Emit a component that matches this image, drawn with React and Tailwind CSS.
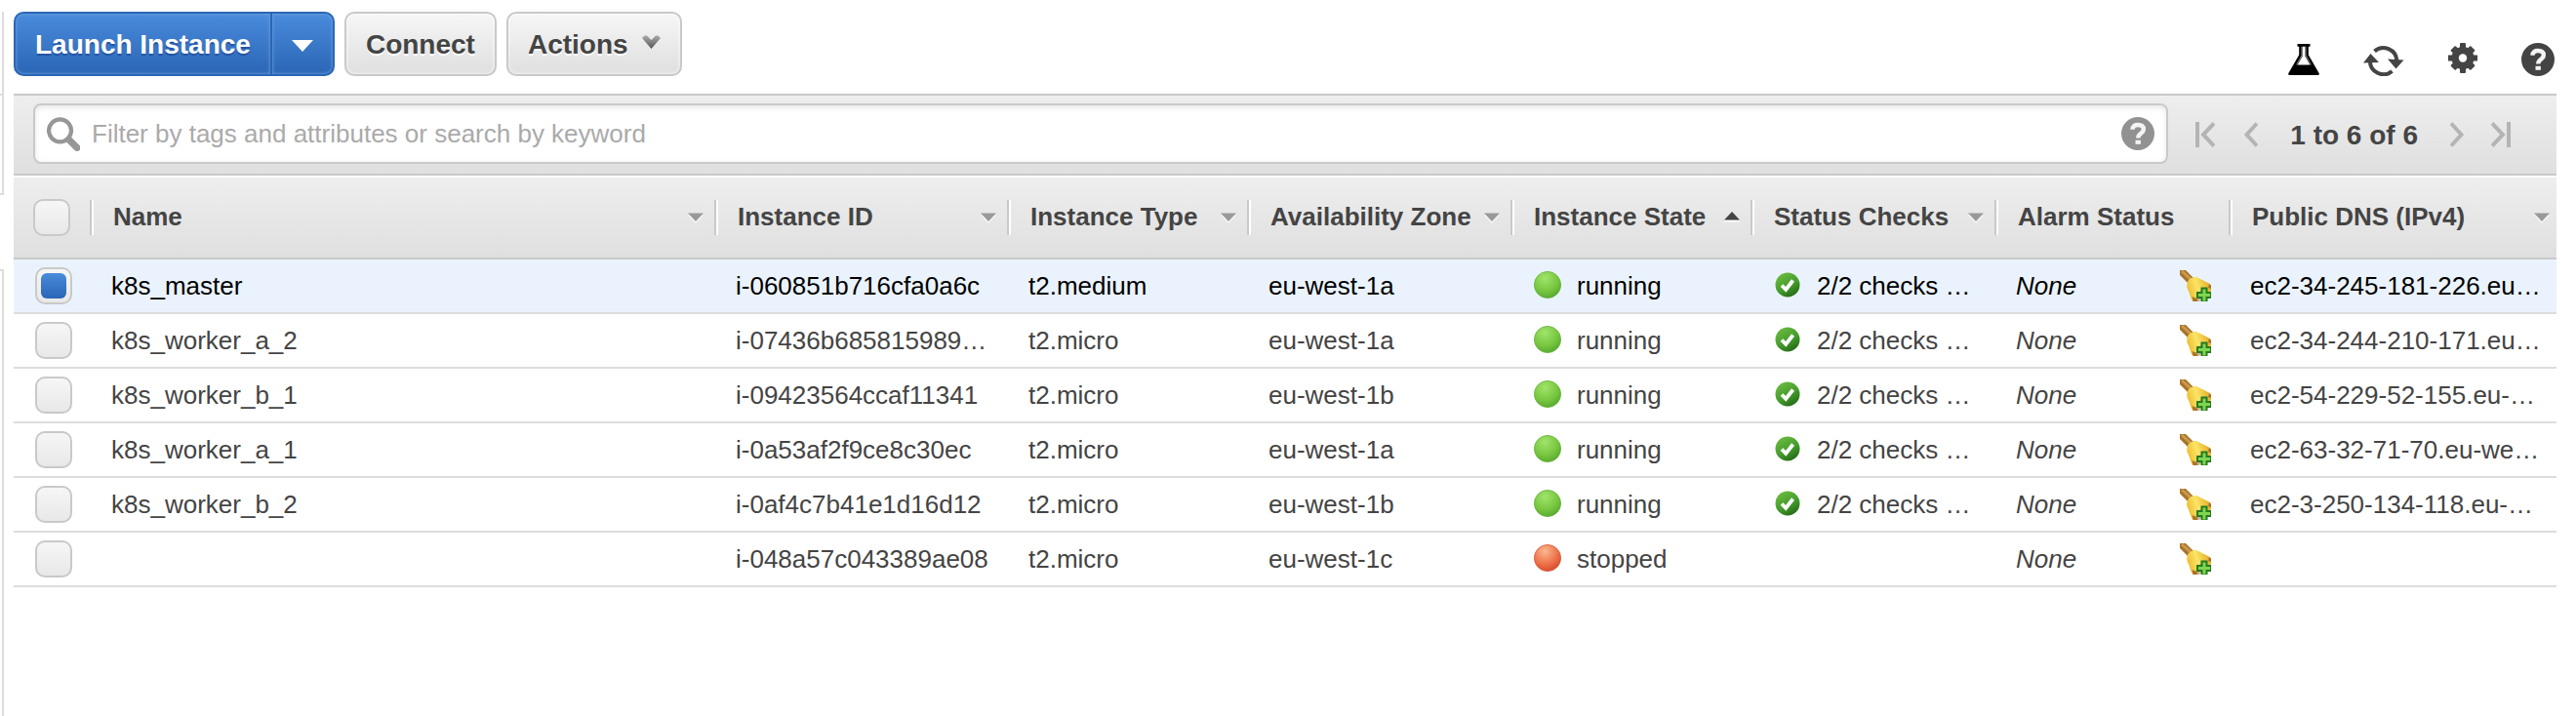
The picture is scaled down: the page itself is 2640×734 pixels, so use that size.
import React from "react";

const instances = [
  { name: "k8s_master", id: "i-060851b716cfa0a6c", type: "t2.medium", zone: "eu-west-1a", state: "running", checks: "2/2 checks …", dns: "ec2-34-245-181-226.eu…", selected: true },
  { name: "k8s_worker_a_2", id: "i-07436b685815989…", type: "t2.micro", zone: "eu-west-1a", state: "running", checks: "2/2 checks …", dns: "ec2-34-244-210-171.eu…" },
  { name: "k8s_worker_b_1", id: "i-09423564ccaf11341", type: "t2.micro", zone: "eu-west-1b", state: "running", checks: "2/2 checks …", dns: "ec2-54-229-52-155.eu-…" },
  { name: "k8s_worker_a_1", id: "i-0a53af2f9ce8c30ec", type: "t2.micro", zone: "eu-west-1a", state: "running", checks: "2/2 checks …", dns: "ec2-63-32-71-70.eu-we…" },
  { name: "k8s_worker_b_2", id: "i-0af4c7b41e1d16d12", type: "t2.micro", zone: "eu-west-1b", state: "running", checks: "2/2 checks …", dns: "ec2-3-250-134-118.eu-…" },
  { name: "", id: "i-048a57c043389ae08", type: "t2.micro", zone: "eu-west-1c", state: "stopped", checks: "", dns: "" },
];

const columns = [
  { label: "Name", sort: "down", width: "" },
  { label: "Instance ID", sort: "down", width: "w-[300px]" },
  { label: "Instance Type", sort: "down", width: "w-[246px]" },
  { label: "Availability Zone", sort: "down", width: "w-[270px]" },
  { label: "Instance State", sort: "up", width: "w-[246px]" },
  { label: "Status Checks", sort: "down", width: "w-[250px]" },
  { label: "Alarm Status", sort: null, width: "w-[240px]" },
  { label: "Public DNS (IPv4)", sort: "down", width: "w-[336px]" },
];

function FlaskIcon() {
  return (
    <svg className="h-[34px] w-8" viewBox="0 0 32 34" aria-hidden="true">
      <path d="M9.5 1h13v2.8h-1.7v8.4L31.6 31q.8 2-1.2 2H1.6q-2 0-1.2-2L11.2 12.2V3.8H9.5z" fill="#000" />
      <path d="M13.4 3.8h1.4v9.2L9 22.4h14L17.3 13V3.8h1.3v9L24 22.4H8L13.4 12.8z" fill="#777" />
      <path d="M14.8 3.8h2.5V13.5L22.5 22.4H9.5L14.8 13.5z" fill="#fff" />
    </svg>
  );
}

function RefreshIcon() {
  return (
    <svg className="h-[34px] w-[42px]" viewBox="0 0 42 34" aria-hidden="true">
      <g fill="none" stroke="#444" strokeWidth="4">
        <path d="M11.500 8.500A13.800 13.800 0 0 1 34.300 18" />
        <path d="M29.500 29A13.800 13.800 0 0 1 6.900 18" />
      </g>
      <path d="M25 16.500l16.500 1-8 9z" fill="#444" />
      <path d="M0 20.500l7.500-9.500L16 20z" fill="#444" />
    </svg>
  );
}

function GearIcon() {
  return (
    <svg className="h-[34px] w-[30px]" viewBox="0 0 30 34" aria-hidden="true">
      <g fill="#444">
        <circle cx="15" cy="15.5" r="11.500" />
        {[0, 90].map((angle) => (
          <rect key={angle} x="12" y="0" width="6" height="31" rx="1" transform={`rotate(${angle} 15 15.5)`} />
        ))}
        {[45, 135].map((angle) => (
          <rect key={angle} x="11.5" y="1" width="7" height="29" rx="1" transform={`rotate(${angle} 15 15.5)`} />
        ))}
      </g>
      <circle cx="15" cy="15.5" r="4.200" fill="#fff" />
    </svg>
  );
}

function HelpIcon({ color }) {
  return (
    <svg className="size-[34px]" viewBox="0 0 34 34" aria-hidden="true">
      <circle cx="17" cy="17" r="17" fill={color} />
      <path d="M11.500 12.800C11.500 9 14 8 17 8c3.500 0 5.800 1.600 5.800 4.500 0 4.500-5.600 4-5.600 9" fill="none" stroke="#f4f4f4" strokeWidth="4.400" />
      <rect x="14.500" y="23.800" width="5.400" height="4" fill="#f4f4f4" />
    </svg>
  );
}

function SearchIcon() {
  return (
    <svg className="h-[35px] w-[34px] shrink-0" viewBox="0 0 34 35" fill="none" stroke="#979797" aria-hidden="true">
      <circle cx="13.500" cy="13.800" r="11.500" strokeWidth="4.200" />
      <path d="M22.500 23l8.500 8.500" strokeWidth="7" strokeLinecap="round" />
    </svg>
  );
}

function PageArrow({ label, d, wide }) {
  return (
    <button type="button" aria-label={label}>
      <svg className={wide ? "h-[26px] w-5" : "h-[26px] w-3.5"} viewBox={wide ? "0 0 20 26" : "0 0 14 26"} fill="none" stroke="#b4b4b4" strokeWidth="4" aria-hidden="true">
        <path d={d} />
      </svg>
    </button>
  );
}

function StateIcon({ state }) {
  const stopped = state === "stopped";
  return (
    <svg className="size-8 shrink-0" viewBox="0 0 32 32" aria-hidden="true">
      <defs>
        <radialGradient id={`ball-${state}`} cx="40%" cy="25%" r="82%">
          <stop offset="0" stopColor={stopped ? "#f9b890" : "#a0e46a"} />
          <stop offset="0.6" stopColor={stopped ? "#ee7048" : "#78c640"} />
          <stop offset="1" stopColor={stopped ? "#d04526" : "#52a42c"} />
        </radialGradient>
      </defs>
      <circle cx="16" cy="15" r="13.600" fill={`url(#ball-${state})`} stroke={stopped ? "#d8553a" : "#62b038"} strokeWidth="0.800" />
    </svg>
  );
}

function CheckIcon() {
  return (
    <svg className="size-8 shrink-0" viewBox="0 0 32 32" aria-hidden="true">
      <defs>
        <linearGradient id="check-fill" x1="0.200" y1="0" x2="0.800" y2="1">
          <stop offset="0" stopColor="#6cbc40" />
          <stop offset="0.550" stopColor="#459c2c" />
          <stop offset="1" stopColor="#206414" />
        </linearGradient>
      </defs>
      <circle cx="16" cy="15" r="12.500" fill="url(#check-fill)" />
      <path d="M10 15.500l4.200 4.300 7.300-9.300" fill="none" stroke="#fff" strokeWidth="3.800" />
    </svg>
  );
}

function AlarmIcon() {
  return (
    <svg className="size-8" viewBox="0 0 32 32" aria-hidden="true">
      <defs>
        <linearGradient id="bell-fill" x1="0" y1="0.600" x2="1" y2="0.300">
          <stop offset="0" stopColor="#edb92e" />
          <stop offset="0.450" stopColor="#fbe566" />
          <stop offset="1" stopColor="#e3a820" />
        </linearGradient>
      </defs>
      <path d="M0 0h6l8 8-5.500 5.500L0 5z" fill="#a87428" />
      <path d="M3 0l10 9-2 2L1 2z" fill="#c99a50" />
      <path d="M8 12C9 9 13 6.500 17 7l10 5q4 1.500 5 4v5L19 32h-5.500q-2-2-3-6-1-4-3-7.500-1-3 .5-6.500z" fill="url(#bell-fill)" />
      <path d="M30 14q2 1 2 2v3l-3-1z M12.500 27l5 2 1 3h-5z" fill="#a87428" />
      <path d="M18 29l2-7 5-4 4 0-9 14h-2z" fill="#c9b0a0" />
      <path d="M22.500 18.500h5v4.500H32v5h-4.500v4.500h-5V28H18v-5h4.500z" fill="#7ed650" stroke="#267a1c" strokeWidth="2" />
    </svg>
  );
}

function SortArrow({ direction }) {
  return direction === "up" ? (
    <svg className="h-3 w-4 shrink-0" viewBox="0 0 16 12" aria-hidden="true">
      <path d="M0 8.500h16v2H0z" fill="#fff" />
      <path d="M8 0l8 8.500H0z" fill="#444" />
    </svg>
  ) : (
    <svg className="h-3 w-4 shrink-0" viewBox="0 0 16 12" aria-hidden="true">
      <path d="M0 3.500h16L8 12z" fill="#f8f8f8" />
      <path d="M0 1.500h16L8 10z" fill="#999" />
    </svg>
  );
}

function RowCheckbox(props) {
  return (
    <input
      type="checkbox"
      className="grid size-[38px] appearance-none place-content-center rounded-[10px] border-2 border-[#c9c9c9] bg-linear-to-b from-[#f6f6f6] to-[#e8e8e8] before:size-[26px] before:rounded-md checked:before:bg-linear-to-b checked:before:from-[#4a8bdc] checked:before:to-[#2a65b6]"
      {...props}
    />
  );
}

const grayButton =
  "flex h-[66px] items-center gap-3.5 rounded-[10px] border-2 border-[#c9c9c9] bg-linear-to-b from-[#f6f6f6] to-[#dfdfdf] px-5 pt-0.5 text-[28px] font-bold text-[#444] inset-shadow-[0_0_3px_1px] inset-shadow-white/60 [text-shadow:0_2px_0_#fff]";

export default function App() {
  return (
    <div className="flex min-h-screen gap-2.5 bg-white pr-5 font-['Liberation_Sans',Arial,sans-serif] text-[26px] leading-[30px] text-[#444]">
      <div className="flex w-1 shrink-0 flex-col pt-3">
        <div className="h-[86px] border-r-2 border-b-2 border-[#ddd]" />
        <div className="h-[102px] border-r-2 border-b-2 border-[#ddd]" />
        <div className="mt-[76px] flex-1 border-t-2 border-r-2 border-[#ddd]" />
      </div>

      <main className="min-w-0 flex-1">
        <header className="flex items-end justify-between pt-3 pb-[18px]">
          <div className="flex gap-2.5">
            <div className="flex h-[66px] overflow-hidden rounded-[10px] border-2 border-[#2b66b5] bg-linear-to-b from-[#4a8bdc] to-[#2b66b5] text-white">
              <button type="button" className="rounded-l-lg px-5 pt-0.5 text-[28px] font-bold inset-shadow-[0_0_3px_1px] inset-shadow-[#6fa2e0]/70 [text-shadow:0_2px_1px_#2453a0]">
                Launch Instance
              </button>
              <button type="button" aria-label="More launch options" className="rounded-r-lg border-l-2 border-[#2b66b5] px-5 pt-1 inset-shadow-[0_0_3px_1px] inset-shadow-[#6fa2e0]/70">
                <svg className="h-3 w-[22px]" viewBox="0 0 22 12" aria-hidden="true">
                  <path d="M0 0h22L11 12z" fill="#fff" />
                </svg>
              </button>
            </div>
            <button type="button" className={grayButton}>Connect</button>
            <button type="button" className={grayButton}>
              Actions
              <svg className="h-5 w-[19px]" viewBox="0 0 19 20" aria-hidden="true">
                <defs>
                  <linearGradient id="chevron-fill" x1="0" y1="0" x2="0" y2="1">
                    <stop offset="0" stopColor="#aaa" />
                    <stop offset="1" stopColor="#555" />
                  </linearGradient>
                </defs>
                <path d="M0 3l2.500-2.500H5l4.500 4.500L14 .5h2.500L19 3l-9.500 11z" fill="url(#chevron-fill)" />
              </svg>
            </button>
          </div>
          <div className="flex gap-[45px] pr-0.5">
            <button type="button" aria-label="Experiments"><FlaskIcon /></button>
            <button type="button" aria-label="Refresh"><RefreshIcon /></button>
            <button type="button" aria-label="Settings"><GearIcon /></button>
            <button type="button" aria-label="Help"><HelpIcon color="#444" /></button>
          </div>
        </header>

        <div className="flex items-center border-y-2 border-[#c9c9c9] bg-linear-to-b from-[#eee] to-[#dfdfdf] py-2 pr-[47px] pl-5">
          <div className="mb-0.5 flex h-[62px] flex-1 items-center rounded-lg border-2 border-[#c9c9c9] bg-white px-3 inset-shadow-[0_2px_6px] inset-shadow-black/10">
            <SearchIcon />
            <input
              type="text"
              aria-label="Filter instances"
              placeholder="Filter by tags and attributes or search by keyword"
              className="ml-3 min-w-0 flex-1 bg-transparent outline-none placeholder:text-[#aaa]"
            />
            <button type="button" aria-label="Filter help"><HelpIcon color="#929292" /></button>
          </div>
          <nav aria-label="Pagination" className="flex items-center pl-7">
            <PageArrow label="First page" wide d="M2 0v26M19 1.500L8 13l11 11.500" />
            <span className="w-[30px]" />
            <PageArrow label="Previous page" d="M13 1.500L2.500 13 13 24.500" />
            <span className="px-[33px] pt-0.5 text-[28px] font-bold">1 to 6 of 6</span>
            <PageArrow label="Next page" d="M1 1.500L11.500 13 1 24.500" />
            <span className="w-7" />
            <PageArrow label="Last page" wide d="M18 0v26M1 1.500L12 13 1 24.500" />
          </nav>
        </div>

        <table className="mt-0.5 w-full table-fixed border-separate border-spacing-0 text-left">
          <thead>
            <tr className="h-[84px] bg-linear-to-b from-[#eee] to-[#dfdfdf]">
              <th className="w-[78px] border-b-2 border-[#c9c9c9] p-0 pl-5">
                <RowCheckbox aria-label="Select all instances" />
              </th>
              {columns.map((column) => (
                <th key={column.label} scope="col" className={`group border-b-2 border-[#c9c9c9] p-0 ${column.width}`}>
                  <button type="button" className="flex h-9 w-full items-center justify-between border-l-2 border-[#c9c9c9] pr-[11px] font-bold whitespace-nowrap group-last:pr-[7px]">
                    <span className="flex h-9 items-center border-l-2 border-white pb-0.5 pl-5">{column.label}</span>
                    {column.sort && <SortArrow direction={column.sort} />}
                  </button>
                </th>
              ))}
            </tr>
          </thead>
          <tbody>
            {instances.map((row) => (
              <tr
                key={row.id}
                className="h-14 whitespace-nowrap data-[selected=true]:bg-[#eaf3fd] data-[selected=true]:text-black *:border-b-2 *:border-[#ddd] *:p-0 *:pl-[22px]"
                data-selected={Boolean(row.selected)}
              >
                <td><RowCheckbox aria-label={`Select ${row.id}`} defaultChecked={row.selected} /></td>
                <td>{row.name}</td>
                <td>{row.id}</td>
                <td>{row.type}</td>
                <td>{row.zone}</td>
                <td>
                  <div className="flex items-center gap-3.5"><StateIcon state={row.state} />{row.state}</div>
                </td>
                <td>
                  {row.checks && <div className="flex items-center gap-3.5"><CheckIcon />{row.checks}</div>}
                </td>
                <td>
                  <div className="flex items-center justify-between pr-[18px]">
                    <em>None</em>
                    <button type="button" aria-label={`Create alarm for ${row.id}`}><AlarmIcon /></button>
                  </div>
                </td>
                <td>{row.dns}</td>
              </tr>
            ))}
          </tbody>
        </table>
      </main>
    </div>
  );
}
